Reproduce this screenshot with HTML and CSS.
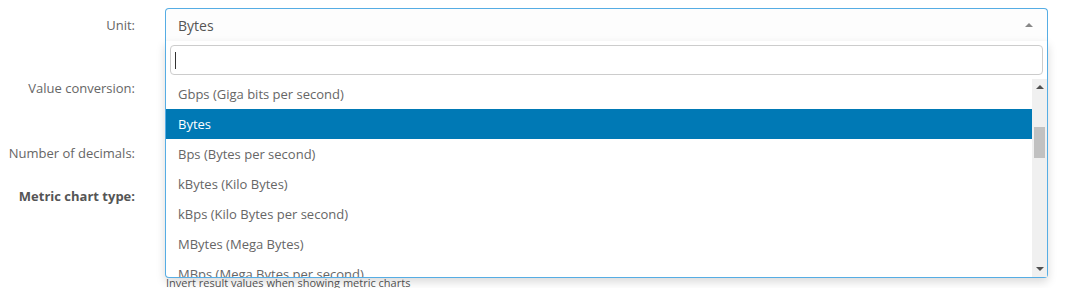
FILE: index.html
```html
<!DOCTYPE html>
<html>
    <head>
        <meta charset="UTF-8">
        <meta name="viewport" content="width=device-width, initial-scale=1">
        <link rel="stylesheet" href="styles.css">
    </head>
    <body>
        <form class="metric-form">
            <div class="form-row row-unit">
                <label class="form-label">Unit:</label>
                <div class="form-field">
                    <div class="select-box">
                        <span class="select-value">Bytes</span>
                        <span class="select-arrow"></span>
                    </div>
                </div>
            </div>

            <div class="form-row row-conversion">
                <label class="form-label">Value conversion:</label>
                <div class="form-field"></div>
            </div>

            <div class="form-row row-decimals">
                <label class="form-label">Number of decimals:</label>
                <div class="form-field"></div>
            </div>

            <div class="form-row row-chart">
                <label class="form-label strong">Metric chart type:</label>
                <div class="form-field"></div>
            </div>

            <div class="form-row row-help">
                <span class="form-label"></span>
                <div class="form-field help-text">Invert result values when showing metric charts</div>
            </div>

            <!-- Open dropdown of the Unit select, drawn over the form -->
            <div class="dropdown">
                <div class="search-wrap">
                    <div class="search-input"><span class="caret"></span></div>
                </div>
                <div class="results">
                    <ul class="result-list">
                        <li>Gbps (Giga bits per second)</li>
                        <li class="highlighted">Bytes</li>
                        <li>Bps (Bytes per second)</li>
                        <li>kBytes (Kilo Bytes)</li>
                        <li>kBps (Kilo Bytes per second)</li>
                        <li>MBytes (Mega Bytes)</li>
                        <li>MBps (Mega Bytes per second)</li>
                    </ul>
                    <div class="scrollbar">
                        <span class="arrow-up"></span>
                        <span class="thumb"></span>
                        <span class="arrow-down"></span>
                    </div>
                </div>
            </div>
        </form>
    </body>
</html>
```

FILE: styles.css
```css
* {
    box-sizing: border-box;
}

body {
    margin: 0;
    background: #fff;
    font-family: "Open Sans", "DejaVu Sans", sans-serif;
    color: #666;
}

.metric-form {
    position: relative;
    padding-top: 8px;
}

/* Label / field rows */
.form-row {
    display: flex;
    align-items: center;
    gap: 30px;
}

.form-label {
    width: 135px;
    flex-shrink: 0;
    text-align: right;
    font-size: 13px;
    color: #666;
}

.form-label.strong {
    font-weight: bold;
    color: #555;
}

.form-field {
    width: 883px;
}

.row-unit {
    height: 33px;
}

.row-conversion {
    height: 34px;
    margin-top: 30px;
}

.row-decimals {
    height: 34px;
    margin-top: 31px;
}

.row-chart {
    height: 34px;
    margin-top: 9px;
}

.row-help {
    margin-top: 62px;
}

.help-text {
    font-size: 11px;
    line-height: 16px;
    color: #555;
    padding-left: 1px;
}

/* Select box (open state) */
.select-box {
    display: flex;
    align-items: center;
    justify-content: space-between;
    height: 33px;
    padding: 0 12px;
    border: 1px solid #56ade4;
    border-bottom: none;
    border-radius: 4px 4px 0 0;
    background: #fdfdfd;
}

.select-value {
    font-size: 14px;
    color: #555;
}

.select-arrow {
    width: 0;
    height: 0;
    margin-right: 2px;
    border-left: 4px solid transparent;
    border-right: 4px solid transparent;
    border-bottom: 4px solid #888;
}

/* Dropdown */
.dropdown {
    position: absolute;
    left: 165px;
    top: 41px;
    width: 883px;
    background: #fff;
    border: 1px solid #56ade4;
    border-top: none;
    border-radius: 0 0 4px 4px;
    box-shadow: 0 4px 10px rgba(0, 0, 0, 0.15);
}

.search-wrap {
    padding: 4px;
}

.search-input {
    display: flex;
    align-items: center;
    height: 30px;
    padding-left: 4px;
    border: 1px solid #ccc;
    border-radius: 4px;
    background: #fff;
}

.caret {
    width: 1px;
    height: 17px;
    background: #333;
}

.results {
    display: flex;
    height: 198px;
    overflow: hidden;
}

.result-list {
    flex: 1;
    margin: 0;
    padding: 0;
    list-style: none;
}

.result-list li {
    height: 30px;
    line-height: 30px;
    padding: 0 12px;
    font-size: 13px;
    color: #666;
    white-space: nowrap;
}

.result-list li.highlighted {
    background: #0079b5;
    color: #fff;
}

/* Scrollbar of the result list */
.scrollbar {
    display: flex;
    flex-direction: column;
    align-items: center;
    width: 15px;
    background: #f0f0f0;
}

.arrow-up {
    margin-top: 6px;
    border-left: 4px solid transparent;
    border-right: 4px solid transparent;
    border-bottom: 4px solid #505050;
}

.thumb {
    width: 11px;
    height: 31px;
    margin-top: 38px;
    background: #c1c1c1;
}

.arrow-down {
    margin-top: auto;
    margin-bottom: 6px;
    border-left: 4px solid transparent;
    border-right: 4px solid transparent;
    border-top: 4px solid #505050;
}
```
